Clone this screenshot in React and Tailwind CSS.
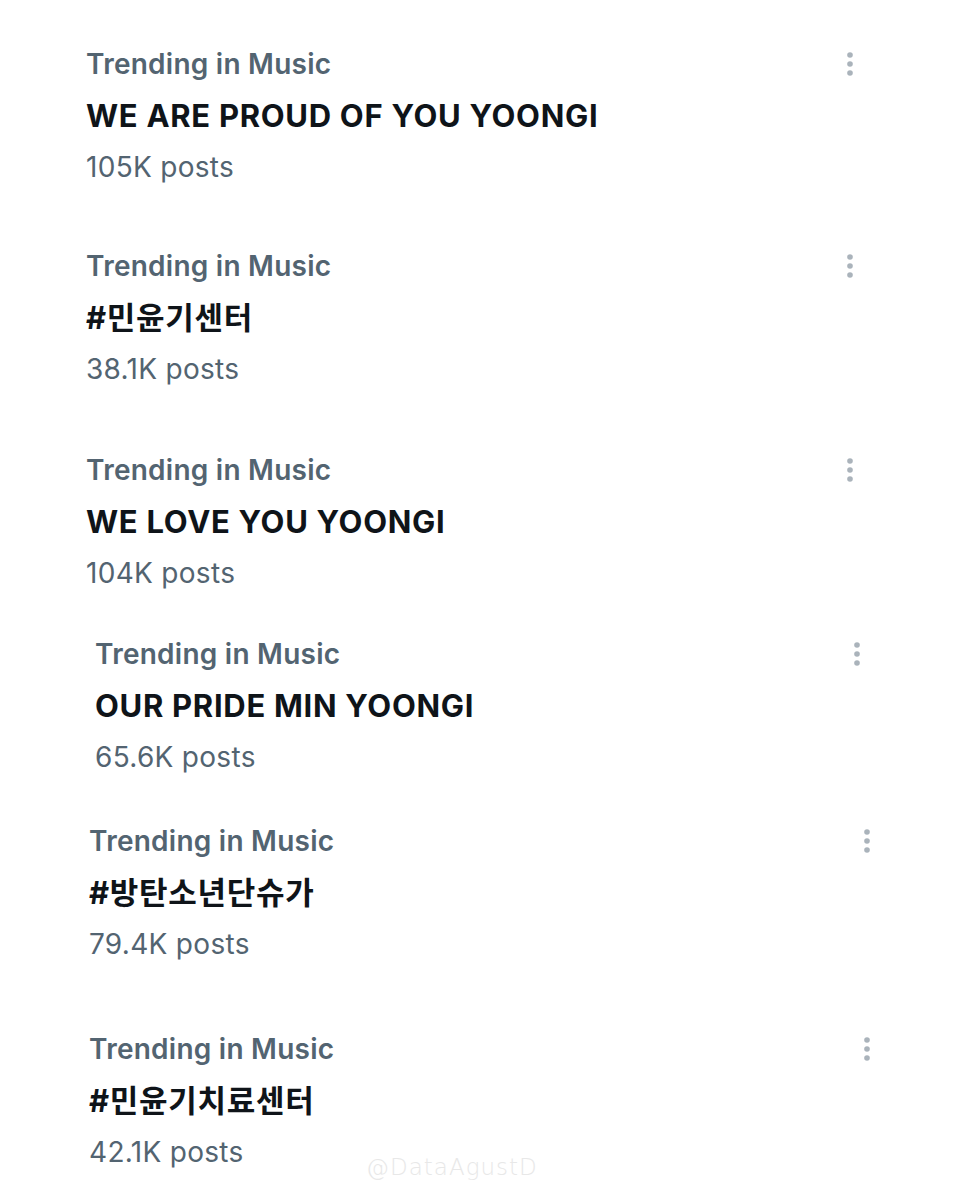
import React from "react";

const trends = [
  { title: "WE ARE PROUD OF YOU YOONGI", count: "105K posts", wrap: "mt-[38px] pl-[86px] pr-[106px]" },
  { title: "#민윤기센터", count: "38.1K posts", wrap: "mt-[48px] pl-[86px] pr-[106px]" },
  { title: "WE LOVE YOU YOONGI", count: "104K posts", wrap: "mt-[50px] pl-[86px] pr-[106px]" },
  { title: "OUR PRIDE MIN YOONGI", count: "65.6K posts", wrap: "mt-[30px] pl-[95px] pr-[99px]" },
  { title: "#방탄소년단슈가", count: "79.4K posts", wrap: "mt-[33px] pl-[89px] pr-[89px]" },
  { title: "#민윤기치료센터", count: "42.1K posts", wrap: "mt-[54px] pl-[89px] pr-[89px]" },
];

const Dots = () => (
  <svg width="8" height="26" viewBox="0 0 8 26" className="mt-[13px]">
    <circle cx="4" cy="4" r="2.8" fill="#aab3bb" />
    <circle cx="4" cy="13" r="2.8" fill="#aab3bb" />
    <circle cx="4" cy="22" r="2.8" fill="#aab3bb" />
  </svg>
);

const TrendItem = ({ title, count, wrap }) => (
  <div className={`flex justify-between ${wrap}`}>
    <div className="flex flex-col">
      <div className="h-[52px] leading-[52px] text-[28px] tracking-[0.25px] font-semibold text-[#536471]">
        Trending in Music
      </div>
      <div className="h-[52px] leading-[52px] text-[31px] tracking-[0.7px] font-bold text-[#0f1419]">
        {title}
      </div>
      <div className="h-[50px] leading-[50px] text-[28px] tracking-[0.3px] text-[#536471]">{count}</div>
    </div>
    <Dots />
  </div>
);

export default function App() {
  return (
    <div
      className="relative w-[960px] h-[1200px] bg-white overflow-hidden"
      style={{ fontFamily: '"Inter", "Noto Sans CJK KR", sans-serif' }}
    >
      {trends.map((t) => (
        <TrendItem key={t.title} {...t} />
      ))}
      <div
        className="absolute left-[366px] top-[1150px] text-[23px] tracking-[1px] text-[#e8e8e8] font-light"
        style={{ fontFamily: '"DejaVu Sans", sans-serif' }}
      >
        @DataAgustD
      </div>
    </div>
  );
}
